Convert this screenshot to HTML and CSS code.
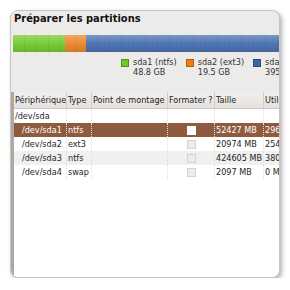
FILE: index.html
```html
<!DOCTYPE html>
<html lang="fr">
<head>
    <meta charset="UTF-8">
    <title>Préparer les partitions</title>
    <link rel="stylesheet" href="styles.css">
</head>
<body>
    <div class="window">
        <h1 class="window-title">Préparer les partitions</h1>

        <div class="disk-bar">
            <div class="part part-ntfs" style="width: 52px"></div>
            <div class="part part-ext3" style="width: 21px"></div>
            <div class="part part-blue" style="flex: 1"></div>
        </div>

        <div class="legend">
            <div class="legend-item">
                <span class="swatch swatch-green"></span>
                <div class="legend-text">sda1 (ntfs)<br>48.8 GB</div>
            </div>
            <div class="legend-item">
                <span class="swatch swatch-orange"></span>
                <div class="legend-text">sda2 (ext3)<br>19.5 GB</div>
            </div>
            <div class="legend-item">
                <span class="swatch swatch-blue"></span>
                <div class="legend-text">sda3 (ntfs)<br>395.4 GB</div>
            </div>
        </div>

        <div class="table-area">
            <div class="row header">
                <div class="cell">Périphérique</div>
                <div class="cell">Type</div>
                <div class="cell">Point de montage</div>
                <div class="cell">Formater ?</div>
                <div class="cell">Taille</div>
                <div class="cell">Utilisé</div>
            </div>
            <div class="row">
                <div class="cell">/dev/sda</div>
                <div class="cell"></div>
                <div class="cell"></div>
                <div class="cell"></div>
                <div class="cell"></div>
                <div class="cell"></div>
            </div>
            <div class="row selected">
                <div class="cell indent">/dev/sda1</div>
                <div class="cell">ntfs</div>
                <div class="cell"></div>
                <div class="cell center"><span class="check"></span></div>
                <div class="cell">52427 MB</div>
                <div class="cell">29632 MB</div>
            </div>
            <div class="row">
                <div class="cell indent">/dev/sda2</div>
                <div class="cell">ext3</div>
                <div class="cell"></div>
                <div class="cell center"><span class="check"></span></div>
                <div class="cell">20974 MB</div>
                <div class="cell">2541 MB</div>
            </div>
            <div class="row odd">
                <div class="cell indent">/dev/sda3</div>
                <div class="cell">ntfs</div>
                <div class="cell"></div>
                <div class="cell center"><span class="check"></span></div>
                <div class="cell">424605 MB</div>
                <div class="cell">38012 MB</div>
            </div>
            <div class="row">
                <div class="cell indent">/dev/sda4</div>
                <div class="cell">swap</div>
                <div class="cell"></div>
                <div class="cell center"><span class="check"></span></div>
                <div class="cell">2097 MB</div>
                <div class="cell">0 MB</div>
            </div>
        </div>
    </div>
</body>
</html>
```

FILE: styles.css
```css
body {
    margin: 0;
    background: #fff;
    font-family: 'DejaVu Sans Condensed', 'DejaVu Sans', 'Liberation Sans', sans-serif;
    font-stretch: condensed;
    color: #1e1e1e;
}

.window {
    margin: 10px 0 0 10px;
    width: 268px;
    height: 266px;
    background: #edebe9;
    border: 1px solid #c9c4be;
    border-radius: 8px;
    box-shadow: 2px 2px 4px rgba(0, 0, 0, 0.3);
    overflow: hidden;
    display: flex;
    flex-direction: column;
}

.window-title {
    margin: 0;
    padding: 1px 3px 0;
    font-size: 11px;
    font-weight: 700;
    line-height: 14px;
    color: #111;
}

.disk-bar {
    display: flex;
    height: 17px;
    margin: 9px 0 0 2px;
    position: relative;
}

.part {
    height: 100%;
    background-image:
        repeating-linear-gradient(to right, transparent 0 11px, rgba(0, 0, 0, 0.06) 11px 12px),
        linear-gradient(to bottom, rgba(255, 255, 255, 0.25), rgba(255, 255, 255, 0) 50%, rgba(0, 0, 0, 0.12));
}

.part-ntfs { background-color: #79cd35; }
.part-ext3 { background-color: #ec8b30; }
.part-blue { background-color: #4e76b3; }

.disk-bar::after {
    content: '';
    position: absolute;
    left: 0;
    right: 0;
    top: 100%;
    height: 6px;
    background: linear-gradient(to bottom, rgba(237, 235, 233, 0.4), #edebe9);
}

.legend {
    display: flex;
    gap: 9px;
    margin: 5px 0 0 110px;
    font-size: 9px;
    line-height: 10px;
    color: #333;
    white-space: nowrap;
}

.legend-item {
    display: flex;
    gap: 4px;
}

.swatch {
    width: 6px;
    height: 6px;
    margin-top: 2px;
    border: 1px solid rgba(0, 0, 0, 0.25);
}

.swatch-green { background: #6fc62b; }
.swatch-orange { background: #ef7d12; }
.swatch-blue { background: #3d66a8; }

.table-area {
    flex: 1;
    margin-top: 15px;
    background: #fff;
    border-left: 3px solid #aea8a2;
    font-size: 9px;
}

.row {
    display: grid;
    grid-template-columns: 53px 25px 76px 47px 49px 50px;
    height: 14px;
    line-height: 14px;
    white-space: nowrap;
}

.cell {
    padding-left: 1px;
    border-right: 1px dotted #e3e0dd;
    overflow: hidden;
}

.header {
    height: 16px;
    line-height: 16px;
    background: linear-gradient(to bottom, #f1efed, #e4e1de);
    border-bottom: 1px solid #cdc8c3;
}

.header .cell {
    border-right: 1px solid #d2cdc8;
}

.indent {
    padding-left: 8px;
}

.center {
    display: flex;
    align-items: center;
    justify-content: center;
}

.check {
    width: 7px;
    height: 7px;
    border: 1px solid #d6d1cc;
    background: #eeebe8;
}

.selected {
    background: #8e5b3f;
    color: #fff;
}

.selected .check {
    background: #fff;
    border-color: #fff;
}

.odd {
    background: #f1f0ef;
}
```
